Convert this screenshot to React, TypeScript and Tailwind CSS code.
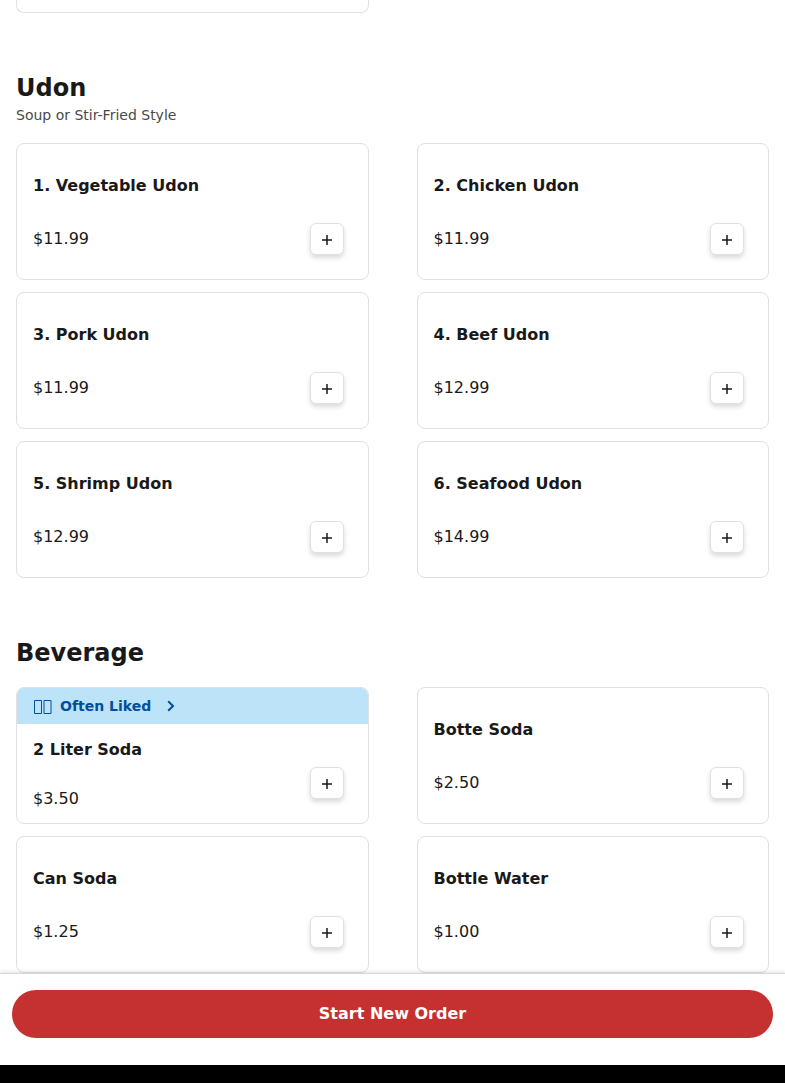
import { useState } from "react";

type Item = { id: string; name: string; price: number; oftenLiked?: boolean };
type Section = { title: string; description?: string; items: Item[] };

const menu: Section[] = [
  {
    title: "Udon",
    description: "Soup or Stir-Fried Style",
    items: [
      { id: "vegetable-udon", name: "1. Vegetable Udon", price: 11.99 },
      { id: "chicken-udon", name: "2. Chicken Udon", price: 11.99 },
      { id: "pork-udon", name: "3. Pork Udon", price: 11.99 },
      { id: "beef-udon", name: "4. Beef Udon", price: 12.99 },
      { id: "shrimp-udon", name: "5. Shrimp Udon", price: 12.99 },
      { id: "seafood-udon", name: "6. Seafood Udon", price: 14.99 },
    ],
  },
  {
    title: "Beverage",
    items: [
      { id: "2-liter-soda", name: "2 Liter Soda", price: 3.5, oftenLiked: true },
      { id: "bottle-soda", name: "Botte Soda", price: 2.5 },
      { id: "can-soda", name: "Can Soda", price: 1.25 },
      { id: "bottle-water", name: "Bottle Water", price: 1 },
    ],
  },
];

function PlusIcon() {
  return (
    <svg width="10" height="10" viewBox="0 0 10 10" fill="none" stroke="currentColor" strokeWidth="1.5" aria-hidden="true">
      <path d="M5 0v10M0 5h10" />
    </svg>
  );
}

function ChevronIcon() {
  return (
    <svg width="8" height="12" viewBox="0 0 8 12" fill="none" stroke="currentColor" strokeWidth="2" aria-hidden="true">
      <path d="M1.2 1.2 6 6l-4.8 4.8" />
    </svg>
  );
}

// pair of outlined boxes in front of the "Often Liked" label
function BoxesIcon() {
  return (
    <svg width="19" height="16" viewBox="0 0 19 16" fill="none" stroke="currentColor" strokeWidth="1" aria-hidden="true">
      <path d="M1.5 2.5h7v13h-7zM11 2.5h7v13h-7z" />
    </svg>
  );
}

function MenuCard({ item, onAdd }: { item: Item; onAdd: () => void }) {
  return (
    <li className="flex min-h-[137px] flex-col overflow-hidden rounded-lg border border-[#e0e0e0] bg-white">
      {item.oftenLiked && (
        <button
          type="button"
          className="flex h-9 items-center bg-[#bde3f8] px-4 text-sm font-bold text-[#004f9b]"
        >
          <span className="mr-2">
            <BoxesIcon />
          </span>
          Often Liked
          <span className="ml-4">
            <ChevronIcon />
          </span>
        </button>
      )}
      <div className="flex flex-1 items-stretch pr-6 pl-4">
        <div
          className={
            item.oftenLiked
              ? "flex flex-1 flex-col justify-between pt-[14px] pb-3"
              : "flex flex-1 flex-col justify-between pt-[30px] pb-7"
          }
        >
          <h3 className="text-base leading-[23px] font-bold">{item.name}</h3>
          <p className="text-base">${item.price.toFixed(2)}</p>
        </div>
        <button
          type="button"
          onClick={onAdd}
          aria-label={`Add ${item.name}`}
          className="mb-6 flex h-8 w-[34px] items-center justify-center self-end rounded-md border border-[#e0e0e0] bg-white pt-0.5 shadow-[0_3px_5px_rgba(0,0,0,0.15)]"
        >
          <PlusIcon />
        </button>
      </div>
    </li>
  );
}

export default function App() {
  const [cart, setCart] = useState<string[]>([]);

  return (
    <div className="bg-white font-['DejaVu_Sans',sans-serif] text-[#191919]">
      <main className="px-4">
        {/* tail of the previous section */}
        <div className="grid grid-cols-2 gap-x-12">
          <div className="h-[13px] rounded-b-lg border border-t-0 border-[#e0e0e0]" />
        </div>

        {menu.map((section) => (
          <section key={section.title} className="pt-[59px]">
            <h2 className="text-2xl font-bold">{section.title}</h2>
            {section.description && (
              <p className="mt-0.5 text-sm leading-[19px] text-[#494949]">{section.description}</p>
            )}
            <ul className="mt-[18px] grid grid-cols-2 gap-x-12 gap-y-3">
              {section.items.map((item) => (
                <MenuCard
                  key={item.id}
                  item={item}
                  onAdd={() => setCart((prev) => [...prev, item.id])}
                />
              ))}
            </ul>
          </section>
        ))}
      </main>

      <footer className="sticky bottom-0">
        <div className="border-t border-[#d8d8d8] bg-white px-3 pt-4 pb-[27px] shadow-[0_-1px_4px_rgba(0,0,0,0.12)]">
          <button
            type="button"
            onClick={() => setCart([])}
            className="h-12 w-full rounded-full bg-[#c53030] text-base font-bold text-white"
          >
            {cart.length > 0 ? `Start New Order (${cart.length})` : "Start New Order"}
          </button>
        </div>
        <div className="h-[18px] bg-black" />
      </footer>
    </div>
  );
}
